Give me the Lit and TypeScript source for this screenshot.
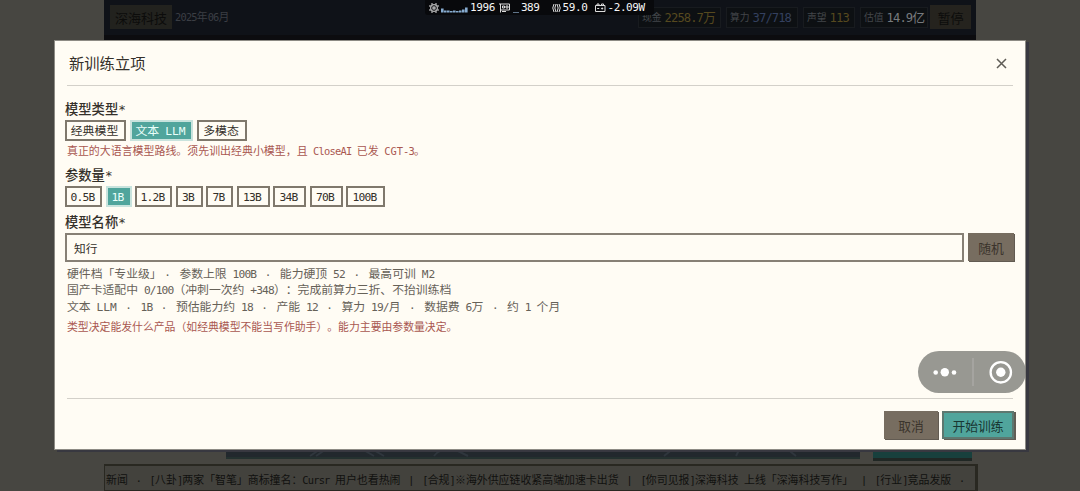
import { LitElement, html, css, svg } from "lit";
import { customElement, property } from "lit/decorators.js";
import { classMap } from "lit/directives/class-map.js";
import { styleMap } from "lit/directives/style-map.js";

interface Option {
  label: string;
  width: number;
  active?: boolean;
}

interface Stat {
  label: string;
  value: string;
  tone: string;
  width: number;
}

const MODEL_TYPES: Option[] = [
  { label: "经典模型", width: 61 },
  { label: "文本 LLM", width: 63, active: true },
  { label: "多模态", width: 50 },
];

const PARAM_SIZES: Option[] = [
  { label: "0.5B", width: 37 },
  { label: "1B", width: 26, active: true },
  { label: "1.2B", width: 37 },
  { label: "3B", width: 27 },
  { label: "7B", width: 27 },
  { label: "13B", width: 33 },
  { label: "34B", width: 33 },
  { label: "70B", width: 33 },
  { label: "100B", width: 39 },
];

const STATS: Stat[] = [
  { label: "现金", value: "2258.7万", tone: "gold", width: 83 },
  { label: "算力", value: "37/718", tone: "blue", width: 72 },
  { label: "声望", value: "113", tone: "gold", width: 52 },
  { label: "估值", value: "14.9亿", tone: "white", width: 68 },
];

const DETAILS = [
  "硬件档「专业级」· 参数上限 100B · 能力硬顶 52 · 最高可训 M2",
  "国产卡适配中 0/100（冲刺一次约 +348）：完成前算力三折、不抬训练档",
  "文本 LLM · 1B · 预估能力约 18 · 产能 12 · 算力 19/月 · 数据费 6万 · 约 1 个月",
];

const NEWS =
  "新闻 · [八卦]两家「智笔」商标撞名：Cursr 用户也看热闹 | [合规]※海外供应链收紧高端加速卡出货 | [你司见报]深海科技 上线「深海科技写作」 | [行业]竞品发版 ·";

const WIDE_RUN = /^(LLM|CGT|M2)$/;
const RUNS = /[·|]|LLM|CGT|M2|[\x20-\x7b\x7d\x7e]+?(?=LLM|CGT|M2)|[\x20-\x7b\x7d\x7e]+|[^\x20-\x7e·]+/g;

/**
 * Text on a half-width / full-width grid: latin runs take half an em per
 * character, CJK and separators take a full em.
 */
@customElement("grid-text")
export class GridText extends LitElement {
  @property({ type: String })
  text = "";

  static styles = css`
    :host {
      display: inline-block;
      white-space: pre;
      text-spacing-trim: space-all;
      font-family: "Noto Sans CJK SC", sans-serif;
    }

    .latin {
      font-family: "DejaVu Sans Mono", monospace;
      font-size: 0.95em;
      letter-spacing: -0.076em;
    }

    .wide {
      letter-spacing: 0;
    }

    .separator {
      font-family: "Liberation Mono", monospace;
      letter-spacing: 0.2em;
      margin-left: 0.2em;
    }
  `;

  render() {
    const runs = this.text.match(RUNS) ?? [];
    return runs.map((run) => {
      if (run === "·" || run === "|") {
        return html`<span class="separator">${run}</span>`;
      }
      const latin = /^[\x20-\x7e]/.test(run);
      return html`<span class=${classMap({ latin, wide: WIDE_RUN.test(run) })}>${run}</span>`;
    });
  }
}

/** The dimmed game page behind the dialog. */
@customElement("game-backdrop")
export class GameBackdrop extends LitElement {
  static styles = css`
    :host {
      display: flex;
      flex-direction: column;
      width: 100%;
      height: 100%;
      padding: 0 104px;
      box-sizing: border-box;
      background: #474641;
    }

    .bar {
      display: flex;
      align-items: flex-start;
      height: 41px;
      padding: 5px 5px 0 6px;
      box-sizing: border-box;
      background: #0f1218;
      border-bottom: 6px solid #0c0c0f;
    }

    .company,
    .pause {
      height: 24px;
      line-height: 25px;
      text-align: center;
      background: #22221e;
      color: #0c0c0b;
      font-size: 13px;
      box-sizing: border-box;
    }

    .company {
      width: 62px;
    }

    .pause {
      width: 41px;
      margin-left: 2px;
      background: #25231e;
    }

    .date {
      margin-left: 3px;
      line-height: 22px;
      font-size: 10.9px;
      color: #3b3e44;
    }

    .stats {
      display: flex;
      gap: 5px;
      margin-left: auto;
      padding-top: 2px;
    }

    .stat {
      display: flex;
      gap: 3px;
      padding-left: 3px;
      height: 21px;
      line-height: 18px;
      box-sizing: border-box;
      border: 1px solid #181b1f;
      background: #0d1013;
      color: #43464a;
      font-size: 9.8px;
    }

    .value {
      font-size: 12.8px;
      line-height: 17px;
    }

    .gold {
      color: #56491f;
    }

    .blue {
      color: #34405f;
    }

    .white {
      color: #777a7d;
    }

    .scene {
      display: flex;
      gap: 13px;
      margin-top: auto;
      padding: 0 4px 0 122px;
    }

    .office {
      display: block;
      width: 634px;
      height: 11px;
      background: #22282d;
    }

    .action {
      flex: 1;
      height: 13px;
      box-sizing: border-box;
      background: #18403d;
      border-bottom: 3px solid #202724;
    }

    .ticker {
      height: 27px;
      margin-top: 3px;
      margin-right: -2px;
      padding-left: 1px;
      line-height: 26px;
      overflow: hidden;
      box-sizing: border-box;
      border: solid #292821;
      border-width: 2px 3px 1px 1px;
      background: #43423d;
      color: #11110f;
      font-size: 10.92px;
      white-space: nowrap;
    }
  `;

  render() {
    return html`
      <div class="bar">
        <grid-text class="company" text="深海科技"></grid-text>
        <grid-text class="date" text="2025年06月"></grid-text>
        <div class="stats">
          ${STATS.map(
            (stat) => html`
              <div class="stat" style=${styleMap({ width: `${stat.width}px` })}>
                <grid-text text=${stat.label}></grid-text>
                <grid-text class="value ${stat.tone}" text=${stat.value}></grid-text>
              </div>
            `
          )}
        </div>
        <grid-text class="pause" text="暂停"></grid-text>
      </div>
      <div class="scene">
        <svg class="office" viewBox="0 0 634 11">
          <path
            d="M84 8l12-8M90 8l12-8M134 0l14 8M144 0l14 8M208 8q8-10 22-6l12 6M438 8l10-8M510 8l4-8M560 0l10 8"
            fill="none"
            stroke="#2f363d"
            stroke-width="2"
          />
          <path d="M0 9h634v2H0z" fill="#24312f" />
        </svg>
        <div class="action"></div>
      </div>
      <div class="ticker"><grid-text text=${NEWS}></grid-text></div>
    `;
  }
}

/** Device performance readout drawn over the top edge. */
@customElement("perf-monitor")
export class PerfMonitor extends LitElement {
  static styles = css`
    :host {
      display: flex;
      align-items: center;
      box-sizing: border-box;
      height: 15px;
      padding-left: 4px;
      background: #08090c;
      border-radius: 0 0 3px 3px;
      color: #f6f6f6;
      font: 11px/15px "DejaVu Sans Mono", monospace;
      letter-spacing: -0.4px;
      white-space: pre;
    }

    svg {
      flex: none;
      fill: none;
      stroke: #dcdcdc;
    }

    .cpu {
      margin-right: 2px;
    }

    .bars {
      margin-right: 2px;
      stroke: none;
      fill: #86abd0;
    }

    .gpu {
      margin-left: 4px;
      margin-right: 3px;
    }

    .line {
      width: 6px;
      height: 1px;
      margin: 9px 2px 0 0;
      background: #60758a;
    }

    .fps {
      margin: 0 2px 0 12px;
    }

    .battery {
      margin: 0 1px 0 8px;
    }
  `;

  render() {
    const bars = [4, 2, 2, 1.5, 2, 1.5, 2, 3, 5];
    return html`
      <svg class="cpu" width="10" height="10" viewBox="0 0 10 10">
        <circle cx="5" cy="5" r="3.4" />
        <rect x="4" y="4" width="2" height="2" />
        <path d="M3 0v2M7 0v2M3 8v2M7 8v2M0 3h2M0 7h2M8 3h2M8 7h2" />
      </svg>
      <svg class="bars" width="27" height="10" viewBox="0 0 27 10">
        ${bars.map((h, i) => svg`<rect x=${i * 3} y=${9.5 - h} width="2.6" height=${h} />`)}
      </svg>
      <span>1996</span>
      <svg class="gpu" width="11" height="10" viewBox="0 0 11 10">
        <path d="M0 1h10.5v6H1.5V1M1.5 7v2.5M3 8.5h4M3.5 3h2v2h-2zM7 3h2v2H7z" />
      </svg>
      <i class="line"></i>
      <span>389</span>
      <svg class="fps" width="9" height="10" viewBox="0 0 9 10">
        <path d="M2 1Q-.5 5 2 9M4 1Q1.7 5 4 9M5 1q2.3 4 0 8M7 1q2.5 4 0 8" />
      </svg>
      <span>59.0</span>
      <svg class="battery" width="11" height="10" viewBox="0 0 11 10">
        <path d="M.5 2.5h9.5v6H.5zM2 2.5V1h2v1.5M6.5 2.5V1h2v1.5M2.2 5.5h2M6.2 5.5h2M7.2 4.5v2" />
      </svg>
      <span>-2.09W</span>
    `;
  }
}

/** Floating mini-program capsule: menu dots and close target. */
@customElement("capsule-menu")
export class CapsuleMenu extends LitElement {
  static styles = css`
    :host {
      display: block;
      width: 108px;
      height: 42px;
      border-radius: 21px;
      background: rgba(126, 126, 121, 0.8);
    }

    svg {
      display: block;
    }
  `;

  render() {
    return html`
      <svg width="108" height="42" viewBox="0 0 108 42" fill="#fff">
        <circle cx="17.7" cy="21.5" r="2.3" />
        <circle cx="26.8" cy="21.3" r="4.2" />
        <circle cx="36" cy="21.5" r="2.3" />
        <path d="M55 7v28" stroke="#aaa9a4" stroke-width="1.5" />
        <circle cx="82.8" cy="21.3" r="10.2" fill="none" stroke="#fff" stroke-width="2.3" />
        <circle cx="82.8" cy="21.3" r="4.7" />
      </svg>
    `;
  }
}

/** Dialog for starting a new training project. */
@customElement("training-dialog")
export class TrainingDialog extends LitElement {
  static styles = css`
    :host {
      display: flex;
      flex-direction: column;
      box-sizing: border-box;
      padding: 0 10px 10px;
      border: 1px solid #8d8b84;
      background: #fffcf4;
      box-shadow: 3px 2px 0 #383840;
      color: #34302a;
    }

    header {
      display: flex;
      justify-content: space-between;
      align-items: center;
      height: 45px;
      margin: 0 2px;
      padding: 0 6px 0 2px;
      box-sizing: border-box;
      border-bottom: 1px solid #d3d0c9;
      font-size: 15.3px;
      line-height: 20px;
    }

    .title {
      padding-bottom: 2px;
    }

    .close {
      width: 11px;
      height: 11px;
      stroke: #5f5c56;
      stroke-width: 1.5;
    }

    .label {
      height: 18px;
      line-height: 17px;
      font-size: 13.3px;
      font-weight: 500;
    }

    .type {
      margin-top: 14px;
    }

    .params {
      margin-top: 6px;
    }

    .name {
      margin-top: 6px;
    }

    .options {
      display: flex;
      gap: 4px;
      height: 21px;
      margin-top: 2px;
    }

    .options.sizes {
      gap: 3.5px;
    }

    .option {
      box-sizing: border-box;
      border: 2px solid #7f786c;
      padding-right: 2px;
      line-height: 16px;
      text-align: center;
      font-size: 11.9px;
    }

    .option.active {
      border-color: #c8e3dd;
      background: #50a59c;
      color: #e9fffa;
    }

    .hint {
      height: 19px;
      line-height: 18px;
      padding-left: 2px;
      color: #a95750;
      font-size: 10.95px;
    }

    .entry {
      display: flex;
      gap: 4px;
      height: 29px;
      margin: 2px 1px 0 0;
    }

    .field {
      flex: 1;
      box-sizing: border-box;
      padding-left: 7px;
      border: 2px solid #878075;
      line-height: 25px;
      font-size: 11.7px;
    }

    .details {
      margin-top: 3px;
      padding-left: 2px;
      font-size: 11.83px;
      line-height: 15px;
      color: #666158;
    }

    .details grid-text {
      display: block;
      height: 16.4px;
    }

    .note {
      margin-top: 3px;
      font-size: 10.85px;
    }

    footer {
      display: flex;
      justify-content: flex-end;
      gap: 4px;
      margin: auto 2px 0;
      padding-top: 12px;
      border-top: 1px solid #d3d0c9;
    }

    .button {
      height: 28px;
      box-sizing: border-box;
      line-height: 29px;
      text-align: center;
      font-size: 12.8px;
      background: #776d60;
      box-shadow: 1px 1px 0 #625b52;
      color: #3b342c;
    }

    .random {
      width: 46px;
    }

    .cancel {
      width: 54px;
    }

    .start {
      width: 72px;
      margin-right: -1px;
      line-height: 26px;
      border: 2px solid #5d7870;
      background: #50a59c;
      color: #183733;
      box-shadow: 2px 1px 0 #625e55;
    }
  `;

  private _options(options: Option[]) {
    return options.map(
      (option) => html`
        <grid-text
          class=${classMap({ option: true, active: !!option.active })}
          style=${styleMap({ width: `${option.width}px` })}
          text=${option.label}
        ></grid-text>
      `
    );
  }

  render() {
    return html`
      <header>
        <grid-text class="title" text="新训练立项"></grid-text>
        <svg class="close" viewBox="0 0 11 11"><path d="M1 1l9 9M10 1L1 10" /></svg>
      </header>
      <grid-text class="label type" text="模型类型*"></grid-text>
      <div class="options">${this._options(MODEL_TYPES)}</div>
      <grid-text
        class="hint"
        text="真正的大语言模型路线。须先训出经典小模型，且 CloseAI 已发 CGT-3。"
      ></grid-text>
      <grid-text class="label params" text="参数量*"></grid-text>
      <div class="options sizes">${this._options(PARAM_SIZES)}</div>
      <grid-text class="label name" text="模型名称*"></grid-text>
      <div class="entry">
        <grid-text class="field" text="知行"></grid-text>
        <grid-text class="button random" text="随机"></grid-text>
      </div>
      <div class="details">
        ${DETAILS.map((line) => html`<grid-text text=${line}></grid-text>`)}
      </div>
      <grid-text
        class="hint note"
        text="类型决定能发什么产品（如经典模型不能当写作助手）。能力主要由参数量决定。"
      ></grid-text>
      <footer>
        <grid-text class="button cancel" text="取消"></grid-text>
        <grid-text class="button start" text="开始训练"></grid-text>
      </footer>
    `;
  }
}

@customElement("app-root")
export class AppRoot extends LitElement {
  static styles = css`
    :host {
      display: block;
      position: relative;
      width: 1080px;
      height: 491px;
      overflow: hidden;
    }

    .monitor {
      position: absolute;
      top: 0;
      left: 425px;
      width: 229px;
    }

    .dialog {
      position: absolute;
      inset: 40px 54px 41px 54px;
    }

    .capsule {
      position: absolute;
      top: 351px;
      left: 918px;
    }
  `;

  render() {
    return html`
      <game-backdrop></game-backdrop>
      <perf-monitor class="monitor"></perf-monitor>
      <training-dialog class="dialog"></training-dialog>
      <capsule-menu class="capsule"></capsule-menu>
    `;
  }
}
